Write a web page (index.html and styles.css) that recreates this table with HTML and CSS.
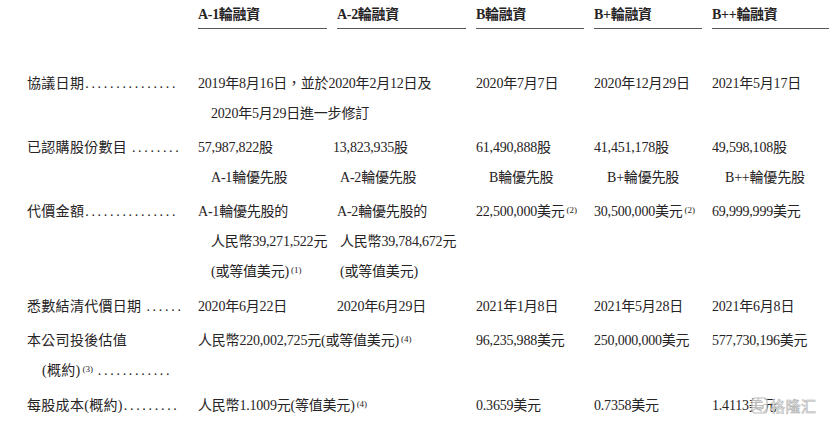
FILE: index.html
```html
<!DOCTYPE html>
<html lang="zh-Hant">
<head>
<meta charset="utf-8">
<title>融資</title>
<link rel="stylesheet" href="styles.css">
</head>
<body>
<div class="sheet">
  <div class="table">
    <div class="hcell empty"></div>
    <div class="hcell h">A-1輪融資</div>
    <div class="hcell h">A-2輪融資</div>
    <div class="hcell h">B輪融資</div>
    <div class="hcell h">B+輪融資</div>
    <div class="hcell h">B++輪融資</div>

    <div class="lbl"><div>協議日期<span class="dots">...............</span></div></div>
    <div class="c span2"><div>2019年8月16日，並於2020年2月12日及</div><div class="ind">2020年5月29日進一步修訂</div></div>
    <div class="c">2020年7月7日</div>
    <div class="c">2020年12月29日</div>
    <div class="c">2021年5月17日</div>

    <div class="lbl"><div>已認購股份數目 <span class="dots">........</span></div></div>
    <div class="c"><div>57,987,822股</div><div class="ind">A-1輪優先股</div></div>
    <div class="c"><div class="sh">13,823,935股</div><div class="ind2">A-2輪優先股</div></div>
    <div class="c"><div>61,490,888股</div><div class="ind">B輪優先股</div></div>
    <div class="c"><div>41,451,178股</div><div class="ind">B+輪優先股</div></div>
    <div class="c"><div>49,598,108股</div><div class="ind">B++輪優先股</div></div>

    <div class="lbl"><div>代價金額<span class="dots">...............</span></div></div>
    <div class="c"><div>A-1輪優先股的</div><div class="ind">人民幣39,271,522元</div><div class="ind">(或等值美元)<sup>(1)</sup></div></div>
    <div class="c"><div>A-2輪優先股的</div><div class="ind2">人民幣39,784,672元</div><div class="ind2">(或等值美元)</div></div>
    <div class="c"><div>22,500,000美元<sup>(2)</sup></div></div>
    <div class="c"><div>30,500,000美元<sup>(2)</sup></div></div>
    <div class="c"><div>69,999,999美元</div></div>

    <div class="lbl"><div>悉數結清代價日期<span class="dots sp">......</span></div></div>
    <div class="c">2020年6月22日</div>
    <div class="c">2020年6月29日</div>
    <div class="c">2021年1月8日</div>
    <div class="c">2021年5月28日</div>
    <div class="c">2021年6月8日</div>

    <div class="lbl"><div>本公司投後估值</div><div class="lind">(概約)<sup>(3)</sup> <span class="dots">............</span></div></div>
    <div class="c span2"><div>人民幣220,002,725元(或等值美元)<sup>(4)</sup></div></div>
    <div class="c">96,235,988美元</div>
    <div class="c">250,000,000美元</div>
    <div class="c">577,730,196美元</div>

    <div class="lbl"><div>每股成本(概約)<span class="dots">.........</span></div></div>
    <div class="c span2"><div>人民幣1.1009元(等值美元)<sup>(4)</sup></div></div>
    <div class="c">0.3659美元</div>
    <div class="c">0.7358美元</div>
    <div class="c">1.4113美元</div>
  </div>

  <div class="watermark">
    <svg class="wm-icon" width="17" height="17" viewBox="0 0 17 17" aria-hidden="true">
      <rect x="1" y="1" width="15" height="15" rx="3" fill="rgba(255,255,255,0.7)" stroke="#b8b8b8" stroke-width="1.2"/>
      <path d="M12 5.2 H6.2 A1.2 1.2 0 0 0 5 6.4 V10.6 A1.2 1.2 0 0 0 6.2 11.8 H10.8 A1.2 1.2 0 0 0 12 10.6 V8.6 H8.6" fill="none" stroke="#b8b8b8" stroke-width="1.3"/>
    </svg>
    <span class="wm-text">格隆汇</span>
  </div>
</div>
</body>
</html>
```

FILE: styles.css
```css
html, body {
  margin: 0;
  padding: 0;
  background: #ffffff;
}

body {
  font-family: "Liberation Serif", "Noto Sans CJK TC", serif;
  font-size: 14px;
  color: #262324;
  width: 830px;
  height: 421px;
  overflow: hidden;
}

.sheet {
  position: relative;
  width: 830px;
  height: 421px;
}

.table {
  display: grid;
  grid-template-columns: 161px 129px 129px 108px 108px 117px;
  column-gap: 10px;
  row-gap: 4px;
  padding-left: 27px;
  line-height: 30px;
  white-space: nowrap;
}

.hcell {
  height: 26px;
  line-height: 26px;
  padding-top: 2px;
  margin-bottom: 36px;
}

.h {
  font-weight: bold;
  border-bottom: 1.5px solid #5a5758;
  letter-spacing: -0.3px;
}

.lbl {
  letter-spacing: 0.3px;
}

.c {
  letter-spacing: -0.2px;
}

.dots {
  letter-spacing: 2.7px;
  margin-left: 1px;
}

.dots.sp {
  margin-left: 5px;
}

.lind {
  padding-left: 15px;
}

.span2 {
  grid-column: span 2;
}

.ind {
  padding-left: 13px;
}

.ind2 {
  padding-left: 3px;
}

.sh {
  margin-left: -4px;
}

sup {
  font-size: 9px;
  vertical-align: 0;
  position: relative;
  top: -3px;
  margin-left: 2px;
  letter-spacing: 0;
}

.watermark {
  position: absolute;
  left: 751px;
  top: 397px;
  display: flex;
  align-items: center;
  gap: 2px;
}

.wm-text {
  font-family: "Noto Sans CJK SC", sans-serif;
  font-size: 15px;
  line-height: 17px;
  color: rgba(255, 255, 255, 0.85);
  -webkit-text-stroke: 0.6px #b0b0b0;
  letter-spacing: 0.5px;
}
```
